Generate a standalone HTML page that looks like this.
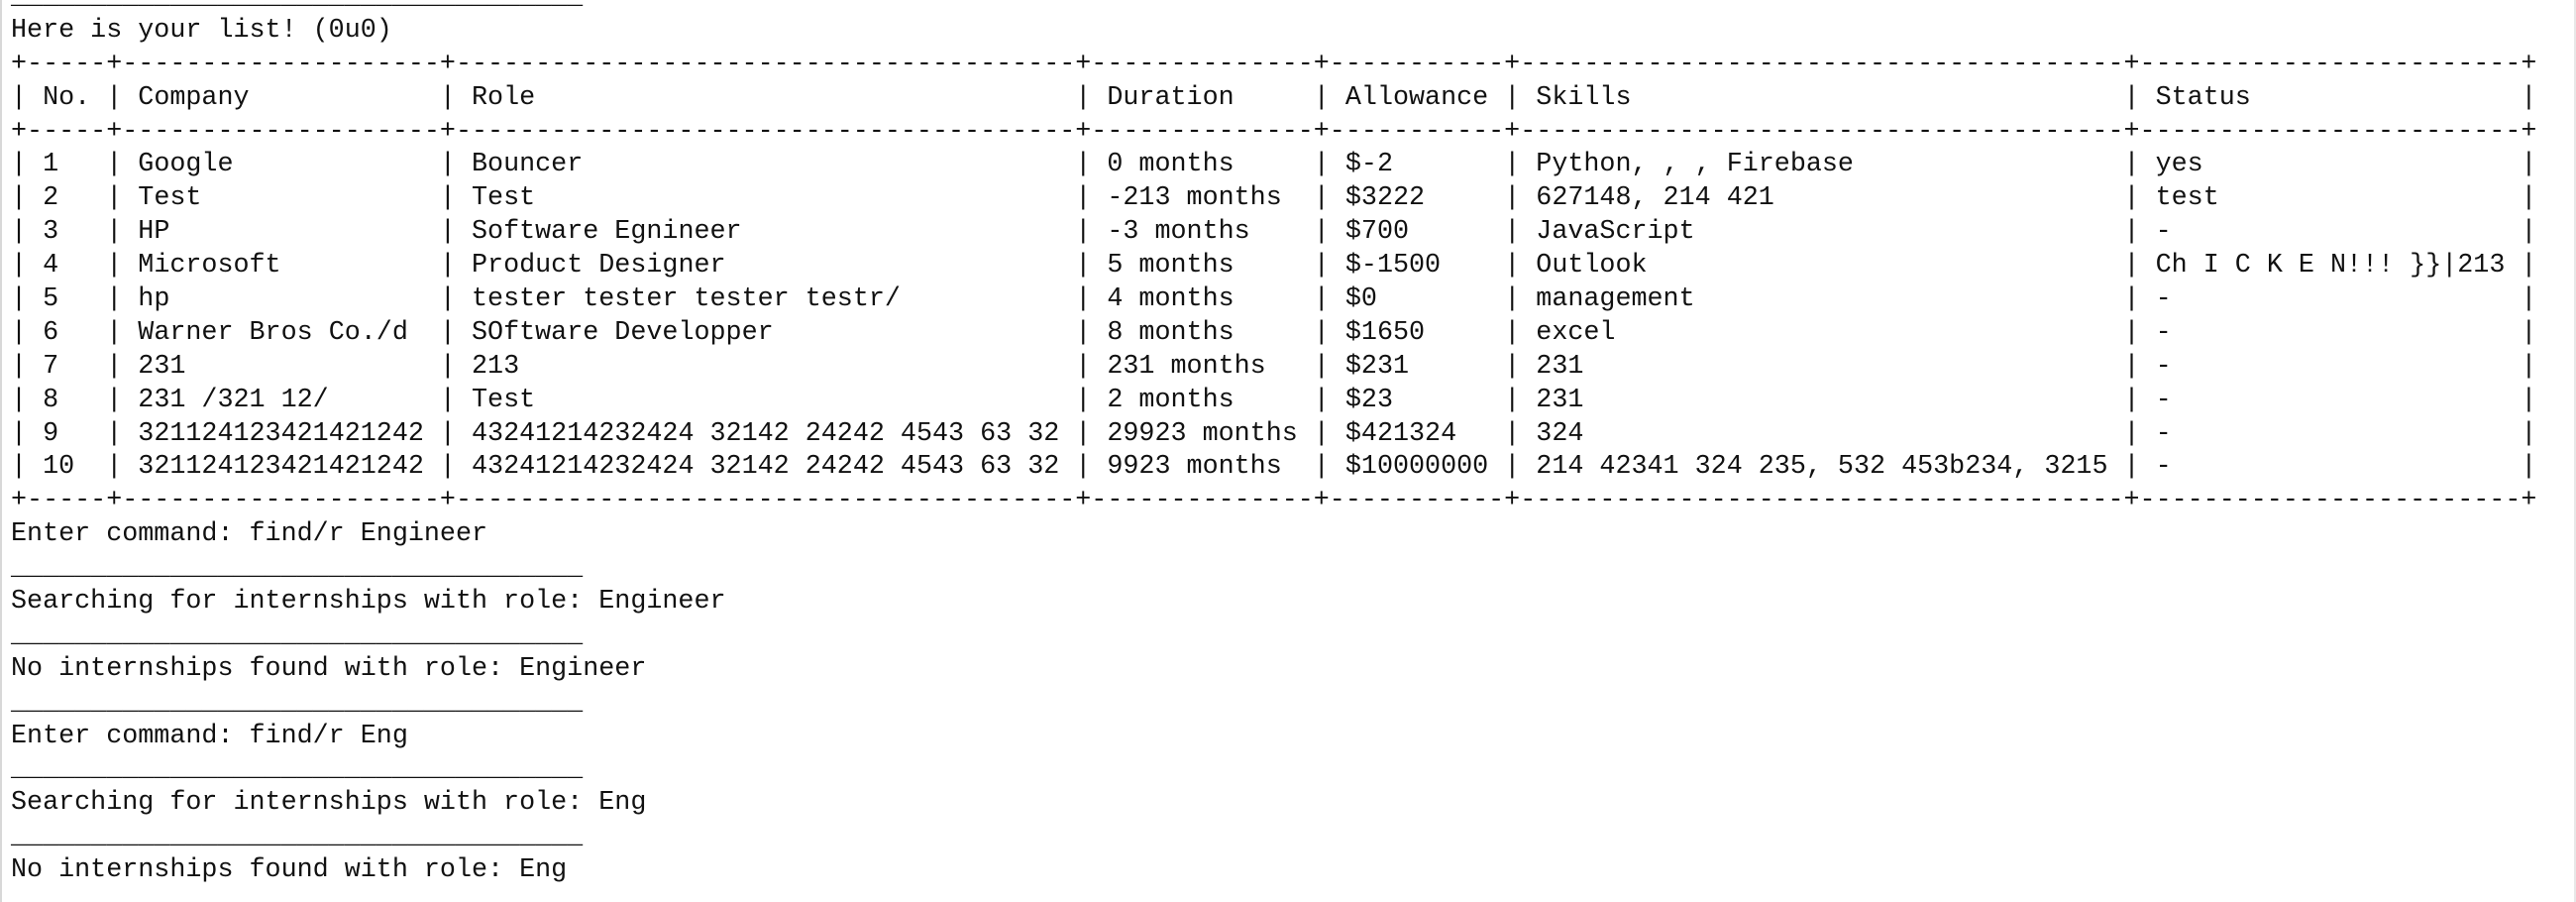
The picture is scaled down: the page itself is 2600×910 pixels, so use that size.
<!DOCTYPE html>
<html><head><meta charset="utf-8"><style>
html,body{margin:0;padding:0;background:#fff;width:2600px;height:910px;overflow:hidden;}
body{position:relative;}
#t{position:absolute;left:11px;top:-19px;font-family:"Liberation Mono",monospace;font-size:26.73px;line-height:33.9px;color:#111;}
#t div{height:33.9px;white-space:pre;}
#t span{display:inline-block;overflow:hidden;vertical-align:top;white-space:pre;}
.a{width:5ch}.b{width:20ch}.c{width:39ch}.d{width:14ch}.e{width:11ch}.f{width:38ch}.g{width:24ch}
#lb{position:absolute;left:0;top:0;width:2px;height:910px;background:#d8d8d8;}
#rb{position:absolute;right:0;top:0;width:2px;height:910px;background:#e8e8e8;}
</style></head><body>
<div id="lb"></div><div id="rb"></div>
<div id="t"><div>____________________________________</div><div>Here is your list! (0u0)</div><div>+-----+--------------------+---------------------------------------+--------------+-----------+--------------------------------------+------------------------+</div><div>|<span class="a"> No.</span>|<span class="b"> Company</span>|<span class="c"> Role</span>|<span class="d"> Duration</span>|<span class="e"> Allowance</span>|<span class="f"> Skills</span>|<span class="g"> Status</span>|</div><div>+-----+--------------------+---------------------------------------+--------------+-----------+--------------------------------------+------------------------+</div><div>|<span class="a"> 1</span>|<span class="b"> Google</span>|<span class="c"> Bouncer</span>|<span class="d"> 0 months</span>|<span class="e"> $-2</span>|<span class="f"> Python, , , Firebase</span>|<span class="g"> yes</span>|</div><div>|<span class="a"> 2</span>|<span class="b"> Test</span>|<span class="c"> Test</span>|<span class="d"> -213 months</span>|<span class="e"> $3222</span>|<span class="f"> 627148, 214 421</span>|<span class="g"> test</span>|</div><div>|<span class="a"> 3</span>|<span class="b"> HP</span>|<span class="c"> Software Egnineer</span>|<span class="d"> -3 months</span>|<span class="e"> $700</span>|<span class="f"> JavaScript</span>|<span class="g"> -</span>|</div><div>|<span class="a"> 4</span>|<span class="b"> Microsoft</span>|<span class="c"> Product Designer</span>|<span class="d"> 5 months</span>|<span class="e"> $-1500</span>|<span class="f"> Outlook</span>|<span class="g"> Ch I C K E N!!! }}|213</span>|</div><div>|<span class="a"> 5</span>|<span class="b"> hp</span>|<span class="c"> tester tester tester testr/</span>|<span class="d"> 4 months</span>|<span class="e"> $0</span>|<span class="f"> management</span>|<span class="g"> -</span>|</div><div>|<span class="a"> 6</span>|<span class="b"> Warner Bros Co./d</span>|<span class="c"> SOftware Developper</span>|<span class="d"> 8 months</span>|<span class="e"> $1650</span>|<span class="f"> excel</span>|<span class="g"> -</span>|</div><div>|<span class="a"> 7</span>|<span class="b"> 231</span>|<span class="c"> 213</span>|<span class="d"> 231 months</span>|<span class="e"> $231</span>|<span class="f"> 231</span>|<span class="g"> -</span>|</div><div>|<span class="a"> 8</span>|<span class="b"> 231 /321 12/</span>|<span class="c"> Test</span>|<span class="d"> 2 months</span>|<span class="e"> $23</span>|<span class="f"> 231</span>|<span class="g"> -</span>|</div><div>|<span class="a"> 9</span>|<span class="b"> 321124123421421242</span>|<span class="c"> 43241214232424 32142 24242 4543 63 32</span>|<span class="d"> 29923 months</span>|<span class="e"> $421324</span>|<span class="f"> 324</span>|<span class="g"> -</span>|</div><div>|<span class="a"> 10</span>|<span class="b"> 321124123421421242</span>|<span class="c"> 43241214232424 32142 24242 4543 63 32</span>|<span class="d"> 9923 months</span>|<span class="e"> $10000000</span>|<span class="f"> 214 42341 324 235, 532 453b234, 3215</span>|<span class="g"> -</span>|</div><div>+-----+--------------------+---------------------------------------+--------------+-----------+--------------------------------------+------------------------+</div><div>Enter command: find/r Engineer</div><div>____________________________________</div><div>Searching for internships with role: Engineer</div><div>____________________________________</div><div>No internships found with role: Engineer</div><div>____________________________________</div><div>Enter command: find/r Eng</div><div>____________________________________</div><div>Searching for internships with role: Eng</div><div>____________________________________</div><div>No internships found with role: Eng</div></div>
</body></html>
